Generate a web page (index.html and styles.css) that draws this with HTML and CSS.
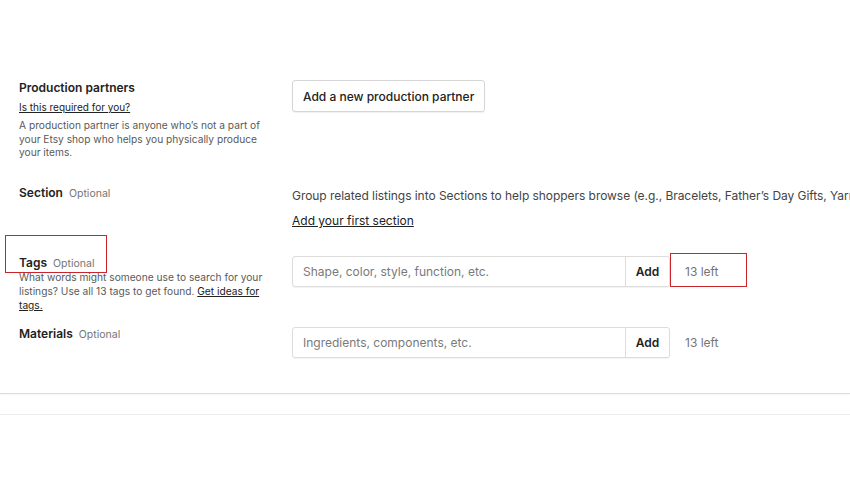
FILE: index.html
```html
<!DOCTYPE html>
<html>
<head>
<meta charset="utf-8">
<link rel="stylesheet" href="styles.css">
</head>
<body>
<div class="page">
  <div class="row row-partners">
    <div class="label">
      <div class="title">Production partners</div>
      <a class="help-link" href="#">Is this required for you?</a>
      <p class="desc">A production partner is anyone who’s not a part of your Etsy shop who helps you physically produce your items.</p>
    </div>
    <div class="field">
      <button class="btn">Add a new production partner</button>
    </div>
  </div>

  <div class="row row-section">
    <div class="label">
      <div class="title">Section <span class="opt">Optional</span></div>
    </div>
    <div class="field field-section">
      <p class="info">Group related listings into Sections to help shoppers browse (e.g., Bracelets, Father’s Day Gifts, Yarn)</p>
      <a class="add-link" href="#">Add your first section</a>
    </div>
  </div>

  <div class="row row-tags">
    <div class="label">
      <div class="title">Tags <span class="opt">Optional</span></div>
      <p class="desc desc-tags">What words might someone use to search for your listings? Use all 13 tags to get found. <a href="#">Get ideas for tags.</a></p>
      <div class="annot annot-tags"></div>
    </div>
    <div class="field field-input">
      <div class="input-group">
        <input type="text" placeholder="Shape, color, style, function, etc.">
        <button class="add">Add</button>
      </div>
      <span class="left">13 left</span>
      <div class="annot annot-left"></div>
    </div>
  </div>

  <div class="row row-materials">
    <div class="label">
      <div class="title">Materials <span class="opt">Optional</span></div>
    </div>
    <div class="field field-input">
      <div class="input-group">
        <input type="text" placeholder="Ingredients, components, etc.">
        <button class="add">Add</button>
      </div>
      <span class="left">13 left</span>
    </div>
  </div>
</div>
<div class="rule rule-a"></div>
<div class="rule rule-b"></div>
</body>
</html>
```

FILE: styles.css
```css
html, body {
  margin: 0;
  padding: 0;
  background: #fff;
}
body {
  font-family: "Inter", "Noto Sans", sans-serif;
  color: #222;
  width: 850px;
  height: 480px;
  overflow: hidden;
}
.page {
  padding: 80px 0 0 19px;
}
.row {
  display: flex;
  align-items: flex-start;
}
.label {
  width: 273px;
  flex: none;
  position: relative;
}
.field {
  flex: 1;
  min-width: 0;
  position: relative;
}
.title {
  font-size: 12px;
  font-weight: 600;
  line-height: 16px;
  color: #222;
  white-space: nowrap;
}
.opt {
  font-weight: 400;
  font-size: 10.5px;
  color: #757575;
  margin-left: 3px;
}
.help-link {
  display: block;
  margin-top: 4px;
  font-size: 10px;
  line-height: 14px;
  color: #222;
  text-decoration: underline;
}
.desc {
  margin: 5px 0 0;
  width: 250px;
  font-size: 10.2px;
  line-height: 13.7px;
  color: #595959;
}
.desc a {
  color: #222;
  text-decoration: underline;
}
.btn {
  font-family: inherit;
  font-size: 12px;
  font-weight: 500;
  color: #222;
  background: #fff;
  border: 1px solid #d6d6d6;
  border-radius: 3px;
  height: 32px;
  padding: 0 10px;
  box-shadow: 0 1px 1px rgba(0,0,0,0.06);
}
.row-section {
  margin-top: 25px;
}
.field-section {
  padding-top: 3px;
  overflow: hidden;
}
.info {
  margin: 0;
  font-size: 12px;
  line-height: 16px;
  letter-spacing: -0.05px;
  color: #444;
  white-space: nowrap;
}
.add-link {
  display: block;
  margin-top: 9px;
  font-size: 12px;
  line-height: 16px;
  color: #222;
  text-decoration: underline;
  width: max-content;
}
.row-tags {
  margin-top: 26px;
}
.row-tags .title {
  line-height: 15px;
}
.row-tags .field-input {
  padding-top: 1px;
}
.desc-tags {
  margin-top: 0;
}
.field-input {
  display: flex;
  align-items: center;
}
.input-group {
  display: flex;
  width: 378px;
  height: 31px;
  border: 1px solid #dcdcdc;
  border-radius: 3px;
  box-sizing: border-box;
  box-shadow: 0 1px 1px rgba(0,0,0,0.05);
}
.input-group input {
  flex: 1;
  min-width: 0;
  border: 0;
  outline: 0;
  padding: 0 10px;
  font-family: inherit;
  font-size: 12px;
  background: transparent;
  border-radius: 3px 0 0 3px;
}
.input-group input::placeholder {
  color: #7a7a7a;
}
.add {
  width: 44px;
  border: 0;
  border-left: 1px solid #dcdcdc;
  background: #fff;
  font-family: inherit;
  font-size: 12px;
  font-weight: 600;
  color: #222;
  padding: 0;
  border-radius: 0 3px 3px 0;
}
.left {
  margin-left: 15px;
  font-size: 12px;
  color: #757575;
}
.row-materials {
  margin-top: 14px;
}
.row-materials .field-input {
  padding-top: 1px;
}
.annot {
  position: absolute;
  border: 1px solid #c8262b;
  box-sizing: border-box;
}
.annot-tags {
  left: -14px;
  top: -20px;
  width: 102px;
  height: 38px;
}
.annot-left {
  left: 378px;
  top: -2px;
  width: 77px;
  height: 34px;
}
.rule {
  height: 1px;
  width: 100%;
}
.rule-a {
  margin-top: 35px;
  background: #dedede;
  box-shadow: 0 1px 1px rgba(0,0,0,0.04);
}
.rule-b {
  margin-top: 20px;
  background: #ececec;
}
```
